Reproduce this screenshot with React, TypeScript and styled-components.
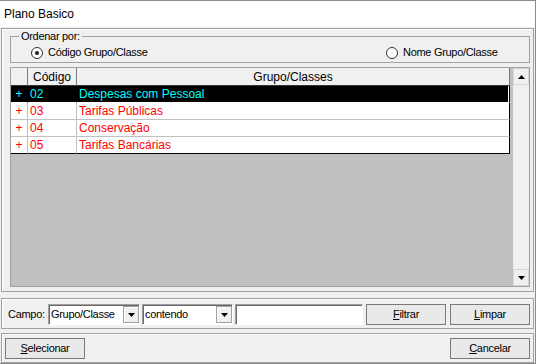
import React from 'react';
import styled, { createGlobalStyle } from 'styled-components';

const GlobalStyle = createGlobalStyle`
  * { box-sizing: border-box; }
  html, body { margin: 0; padding: 0; background: #f0f0f0; }
  body {
    font-family: "Liberation Sans", Arial, sans-serif;
    font-size: 11px;
    color: #000;
  }
`;

const Window = styled.div`
  width: 536px;
  height: 364px;
  display: flex;
  flex-direction: column;
  background: #f0f0f0;
  border-top: 1px solid #8c8c8c;
  border-right: 1px solid #8c8c8c;
  border-bottom: 1px solid #8c8c8c;
  overflow: hidden;
`;

const TitleBar = styled.div`
  flex: none;
  height: 26px;
  background: #fff;
  display: flex;
  align-items: center;
  padding-left: 4px;
  font-size: 12px;
`;

const Panel = styled.div<{ $height: number; $top: number }>`
  flex: none;
  height: ${(p) => p.$height}px;
  margin: ${(p) => p.$top}px 1px 0 1px;
  border: 1px solid #a0a0a0;
  box-shadow: inset 1px 1px 0 #fff;
`;

const MainBody = styled.div`
  display: flex;
  flex-direction: column;
  padding: 0 3px 0 8px;
`;

const GroupBox = styled.fieldset`
  margin: 1px 0 0 0;
  padding: 0;
  border: 1px solid #a0a0a0;
  min-width: 0;
`;

const Legend = styled.legend`
  margin-left: 8px;
  padding: 0 2px;
  line-height: 13px;
  font-size: 11px;
  letter-spacing: -0.3px;
`;

const RadioRow = styled.div`
  display: grid;
  grid-template-columns: 355px auto;
  align-items: center;
  height: 19px;
  padding-left: 20px;
`;

const RadioOption = styled.label`
  display: flex;
  align-items: center;
  gap: 5px;
  letter-spacing: -0.3px;
  line-height: 13px;
`;

const RadioCircle = styled.span<{ $checked?: boolean }>`
  width: 12px;
  height: 12px;
  border-radius: 50%;
  border: 1px solid #333;
  background: #fff;
  display: flex;
  align-items: center;
  justify-content: center;
  &::after {
    content: '';
    width: 4px;
    height: 4px;
    border-radius: 50%;
    background: ${(p) => (p.$checked ? '#222' : 'transparent')};
  }
`;

const GridBox = styled.div`
  margin-top: 4px;
  height: 220px;
  border: 1px solid #a0a0a0;
  display: flex;
  background: #c0c0c0;
`;

const DataArea = styled.div`
  flex: 1;
  display: flex;
  flex-direction: column;
`;

const HeaderRow = styled.div`
  display: flex;
  width: 499px;
  height: 18px;
`;

const HeaderCell = styled.div<{ $w: number }>`
  width: ${(p) => p.$w}px;
  height: 18px;
  background: #f0f0f0;
  border-right: 1px solid #7a7a7a;
  border-bottom: 1px solid #333;
  display: flex;
  align-items: center;
  justify-content: center;
  padding-top: 1px;
  font-size: 12px;
  line-height: 16px;
`;

const Row = styled.div<{ $selected?: boolean }>`
  display: flex;
  width: 499px;
  height: 17px;
  background: ${(p) => (p.$selected ? '#000' : '#fff')};
  color: ${(p) => (p.$selected ? '#00ffff' : '#ff0000')};
  font-size: 12px;
  line-height: 16px;
`;

const Cell = styled.div<{
  $w: number;
  $center?: boolean;
  $selected?: boolean;
  $lastCol?: boolean;
  $lastRow?: boolean;
}>`
  width: ${(p) => p.$w}px;
  height: 17px;
  padding-left: ${(p) => (p.$center ? 0 : 2)}px;
  text-align: ${(p) => (p.$center ? 'center' : 'left')};
  white-space: nowrap;
  overflow: hidden;
  border-right: 1px solid
    ${(p) => (p.$lastCol || p.$selected ? '#000' : '#c0c0c0')};
  border-bottom: 1px solid
    ${(p) => (p.$lastRow ? '#000' : p.$selected ? '#fff' : '#c0c0c0')};
  box-shadow: ${(p) => (p.$selected && p.$lastCol ? 'inset -1px 0 0 #fff' : 'none')};
`;

const ScrollBar = styled.div`
  width: 16px;
  display: flex;
  flex-direction: column;
  background: #f0f0f0;
`;

const ScrollButton = styled.div`
  height: 17px;
  display: flex;
  align-items: center;
  justify-content: center;
  background: #f0f0f0;
  border: 1px solid #d6d6d6;
`;

const ScrollTrack = styled.div`
  flex: 1;
  background: #f0f0f0;
`;

const ToolRow = styled.div<{ $padTop: number; $spread?: boolean }>`
  display: flex;
  align-items: flex-start;
  justify-content: ${(p) => (p.$spread ? 'space-between' : 'flex-start')};
  padding: ${(p) => p.$padTop}px 3px 0 ${(p) => (p.$spread ? 3 : 6)}px;
`;

const FieldLabel = styled.span`
  width: 40px;
  line-height: 21px;
  letter-spacing: -0.3px;
`;

const Combo = styled.div<{ $w: number; $ml: number }>`
  width: ${(p) => p.$w}px;
  height: 21px;
  margin-left: ${(p) => p.$ml}px;
  background: #fff;
  border: 1px solid;
  border-color: #a0a0a0 #fff #fff #a0a0a0;
  box-shadow: inset 1px 1px 0 #696969;
  display: flex;
  align-items: center;
  padding-left: 2px;
  letter-spacing: -0.3px;
`;

const ComboText = styled.span`
  flex: 1;
  line-height: 13px;
`;

const DropButton = styled.span`
  width: 16px;
  height: 17px;
  background: #f0f0f0;
  border: 1px solid #a0a0a0;
  box-shadow: inset 1px 1px 0 #fff;
  display: flex;
  align-items: center;
  justify-content: center;
`;

const TextBox = styled.div<{ $w: number; $ml: number }>`
  width: ${(p) => p.$w}px;
  height: 21px;
  margin-left: ${(p) => p.$ml}px;
  background: #fff;
  border: 1px solid;
  border-color: #a0a0a0 #fff #fff #a0a0a0;
  box-shadow: inset 1px 1px 0 #696969;
`;

const Button = styled.button<{ $w: number; $ml?: number }>`
  width: ${(p) => p.$w}px;
  height: 21px;
  margin-left: ${(p) => p.$ml ?? 0}px;
  padding: 0;
  background: #e9e9e9;
  border: 1px solid #7a7a7a;
  font-family: inherit;
  font-size: 11px;
  letter-spacing: -0.3px;
  color: #000;
  line-height: 13px;
  u { text-underline-offset: 1px; }
`;

const Arrow = ({ up }: { up?: boolean }) => (
  <svg width="7" height="4" viewBox="0 0 7 4">
    <polygon points={up ? '3.5,0 7,4 0,4' : '0,0 7,0 3.5,4'} fill="#000" />
  </svg>
);

const cols = [17, 49, 433];

const rows = [
  { code: '02', name: 'Despesas com Pessoal' },
  { code: '03', name: 'Tarifas Públicas' },
  { code: '04', name: 'Conservação' },
  { code: '05', name: 'Tarifas Bancárias' },
];

export default function App() {
  return (
    <>
      <GlobalStyle />
      <Window>
        <TitleBar>Plano Basico</TitleBar>

        <Panel $height={264} $top={1}>
          <MainBody>
            <GroupBox>
              <Legend>Ordenar por:</Legend>
              <RadioRow>
                <RadioOption>
                  <RadioCircle $checked />
                  Código Grupo/Classe
                </RadioOption>
                <RadioOption>
                  <RadioCircle />
                  Nome Grupo/Classe
                </RadioOption>
              </RadioRow>
            </GroupBox>

            <GridBox>
              <DataArea>
                <HeaderRow>
                  <HeaderCell $w={cols[0]} />
                  <HeaderCell $w={cols[1]}>Código</HeaderCell>
                  <HeaderCell $w={cols[2]}>Grupo/Classes</HeaderCell>
                </HeaderRow>
                {rows.map((r, i) => {
                  const sel = i === 0;
                  const last = i === rows.length - 1;
                  return (
                    <Row key={r.code} $selected={sel}>
                      <Cell $w={cols[0]} $center $selected={sel} $lastRow={last}>
                        +
                      </Cell>
                      <Cell $w={cols[1]} $selected={sel} $lastRow={last}>
                        {r.code}
                      </Cell>
                      <Cell $w={cols[2]} $selected={sel} $lastRow={last} $lastCol>
                        {r.name}
                      </Cell>
                    </Row>
                  );
                })}
              </DataArea>
              <ScrollBar>
                <ScrollButton>
                  <Arrow up />
                </ScrollButton>
                <ScrollTrack />
                <ScrollButton>
                  <Arrow />
                </ScrollButton>
              </ScrollBar>
            </GridBox>
          </MainBody>
        </Panel>

        <Panel $height={31} $top={6}>
          <ToolRow $padTop={5}>
            <FieldLabel>Campo:</FieldLabel>
            <Combo $w={92} $ml={0}>
              <ComboText>Grupo/Classe</ComboText>
              <DropButton>
                <Arrow />
              </DropButton>
            </Combo>
            <Combo $w={91} $ml={2}>
              <ComboText>contendo</ComboText>
              <DropButton>
                <Arrow />
              </DropButton>
            </Combo>
            <TextBox $w={128} $ml={2} />
            <Button $w={80} $ml={3}>
              <u>F</u>iltrar
            </Button>
            <Button $w={80} $ml={4}>
              <u>L</u>impar
            </Button>
          </ToolRow>
        </Panel>

        <Panel $height={30} $top={4}>
          <ToolRow $padTop={4} $spread>
            <Button $w={80}>
              <u>S</u>elecionar
            </Button>
            <Button $w={80}>
              <u>C</u>ancelar
            </Button>
          </ToolRow>
        </Panel>
      </Window>
    </>
  );
}
